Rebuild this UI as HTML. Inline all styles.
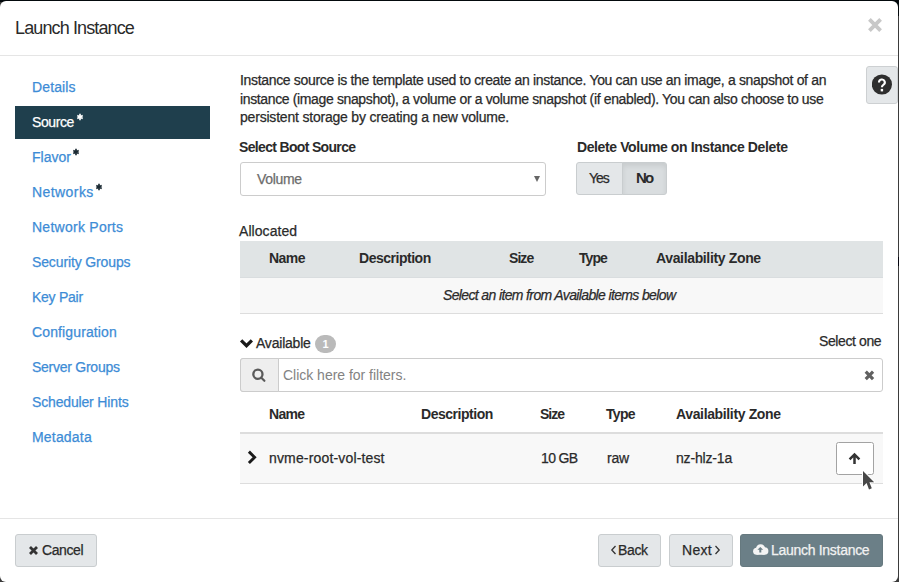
<!DOCTYPE html>
<html><head><meta charset="utf-8"><style>
*{box-sizing:border-box;margin:0;padding:0}
html,body{width:899px;height:582px;overflow:hidden}
body{background:#3b3b3b;font-family:"Liberation Sans",sans-serif;color:#2a2a2a;position:relative}
.t{position:absolute;white-space:nowrap;line-height:normal}
.b{position:absolute}
</style></head><body>
<div class="b" style="left:0;top:0;width:899px;height:2px;background:#03090c"></div>
<div class="b" style="left:880px;top:0;width:19px;height:16px;background:#03090c"></div>
<div class="b" style="left:898px;top:257px;width:1px;height:9px;background:#05050f"></div>
<div class="b" style="left:0;top:1px;width:898px;height:581px;background:#fff;border-radius:6px"></div>
<div class="b" style="left:0;top:55px;width:898px;height:1px;background:#e5e5e5"></div>
<svg class="b" style="left:860px;top:10px" width="30" height="30" viewBox="0 0 30 30"><path d="M9.4 9.4L20.6 20.6M20.6 9.4L9.4 20.6" stroke="#c8c8c8" stroke-width="3.8"/></svg>
<div class="b" style="left:15px;top:106px;width:195px;height:33px;background:#1f3f4d"></div>
<div class="b" style="left:866px;top:66px;width:32px;height:38px;background:#e4e7e9;border:1px solid #cdd0d2;border-radius:3px"></div>
<svg class="b" style="left:872px;top:74px" width="21" height="21" viewBox="0 0 21 21"><circle cx="9.9" cy="10.5" r="10.1" fill="#2e2e2e"/><path d="M7.0 8.4A2.9 2.9 0 1 1 11.3 10.9C10.3 11.5 9.9 12 9.9 13.3" fill="none" stroke="#fff" stroke-width="2.1"/><rect x="8.7" y="14.9" width="2.4" height="2.5" fill="#fff"/></svg>
<div class="b" style="left:240px;top:162px;width:306px;height:34px;border:1px solid #cccccc;border-radius:3px;background:#fff"></div>
<svg class="b" style="left:534px;top:176px" width="6" height="6" viewBox="0 0 6 6"><path d="M0 0H6L3 6Z" fill="#666"/></svg>
<div class="b" style="left:576px;top:162px;width:47px;height:33px;background:#e4e7e9;border:1px solid #c9cdcf;border-radius:3px 0 0 3px"></div>
<div class="b" style="left:622px;top:162px;width:45px;height:33px;background:#d9dddf;border:1px solid #c9cdcf;border-radius:0 3px 3px 0;box-shadow:inset 0 3px 5px rgba(0,0,0,.08)"></div>
<div class="b" style="left:240px;top:241px;width:643px;height:37px;background:#e0e4e5"></div>
<div class="b" style="left:240px;top:277px;width:643px;height:1px;background:#d9dddf"></div>
<div class="b" style="left:240px;top:278px;width:643px;height:35px;background:#f8f8f8;"></div>
<div class="b" style="left:240px;top:313px;width:643px;height:1px;background:#dddddd"></div>
<svg class="b" style="left:239px;top:338px" width="15" height="12" viewBox="0 0 15 12"><path d="M2.13 2.37L7.5 7.74L12.87 2.37" fill="none" stroke="#1a1a1a" stroke-width="3.2"/></svg>
<div class="b" style="left:315px;top:335px;width:21px;height:18px;border-radius:9px;background:#bababa;color:#fff;font-size:11px;font-weight:bold;text-align:center;line-height:18px">1</div>
<div class="b" style="left:240px;top:358px;width:643px;height:34px;border:1px solid #cccccc;border-radius:3px;background:#fff"></div>
<div class="b" style="left:240px;top:358px;width:39px;height:34px;border:1px solid #cccccc;border-radius:3px 0 0 3px;background:#eeeeee"></div>
<svg class="b" style="left:250px;top:368px" width="17" height="16" viewBox="0 0 17 16"><circle cx="7.9" cy="6.3" r="4.6" fill="none" stroke="#5a5a5a" stroke-width="2.3"/><path d="M11.3 9.7L14.4 12.8" stroke="#5a5a5a" stroke-width="2.2" stroke-linecap="round"/></svg>
<svg class="b" style="left:863px;top:369px" width="14" height="14" viewBox="0 0 14 14"><path d="M2.73 2.73L10.07 10.07M10.07 2.73L2.73 10.07" stroke="#606060" stroke-width="3.2"/></svg>
<div class="b" style="left:240px;top:432px;width:643px;height:2px;background:#dddddd"></div>
<div class="b" style="left:240px;top:434px;width:643px;height:49px;background:#f8f8f8"></div>
<div class="b" style="left:240px;top:483px;width:643px;height:1px;background:#dddddd"></div>
<svg class="b" style="left:246px;top:450px" width="12" height="15" viewBox="0 0 12 15"><path d="M2.9 1.6L8.6 7.3L2.9 13.0" fill="none" stroke="#1a1a1a" stroke-width="2.9"/></svg>
<div class="b" style="left:836px;top:442px;width:38px;height:33px;background:#fff;border:1px solid #a3a3a3;border-radius:2.5px"></div>
<svg class="b" style="left:846px;top:450px" width="17" height="17" viewBox="0 0 17 17"><path d="M3.6 9.3L8.5 4.4L13.4 9.3M8.5 5V14" fill="none" stroke="#333" stroke-width="2.5"/></svg>
<div class="b" style="left:0;top:518px;width:898px;height:1px;background:#e5e5e5"></div>
<div class="b" style="left:15px;top:534px;width:82px;height:33px;background:#e4e7e9;border:1px solid #c9cdcf;border-radius:3px"></div>
<div class="b" style="left:598px;top:534px;width:63px;height:33px;background:#e4e7e9;border:1px solid #c9cdcf;border-radius:3px"></div>
<div class="b" style="left:669px;top:534px;width:64px;height:33px;background:#e4e7e9;border:1px solid #c9cdcf;border-radius:3px"></div>
<div class="b" style="left:740px;top:534px;width:143px;height:33px;background:#6b7f87;border:1px solid #66797f;border-radius:3px"></div>
<svg class="b" style="left:27px;top:544px" width="13" height="13" viewBox="0 0 13 13"><path d="M3 3L10 10M10 3L3 10" stroke="#333" stroke-width="2.8"/></svg>
<svg class="b" style="left:609px;top:544px" width="9" height="12" viewBox="0 0 9 12"><path d="M6.5 2L2.8 6L6.5 10" fill="none" stroke="#333" stroke-width="1.3"/></svg>
<svg class="b" style="left:713px;top:544px" width="9" height="12" viewBox="0 0 9 12"><path d="M2.5 2L6.2 6L2.5 10" fill="none" stroke="#333" stroke-width="1.3"/></svg>
<svg class="b" style="left:752px;top:543px" width="17" height="13" viewBox="0 0 17 13"><g fill="#f4f4f4"><circle cx="4.6" cy="8.3" r="3.5"/><circle cx="8.6" cy="5.8" r="4.6"/><circle cx="12.6" cy="8.0" r="3.8"/><rect x="4.6" y="7.5" width="8" height="4.3"/></g><path d="M8.3 3.9L11.2 6.7H9.3V9.6H7.3V6.7H5.4Z" fill="#6b7f87"/></svg>
<div class="t" style="left:15px;top:18px;color:#2a2a2a;font-size:18px;letter-spacing:-0.879px">Launch Instance</div>
<div class="t" style="left:32px;top:79px;color:#3d8cd6;font-size:14px;letter-spacing:0.133px;-webkit-text-stroke:0.25px #3d8cd6">Details</div>
<div class="t" style="left:32px;top:114px;color:#fff;font-size:14px;letter-spacing:-0.420px;-webkit-text-stroke:0.25px #fff">Source</div>
<div class="t" style="left:32px;top:149px;color:#3d8cd6;font-size:14px;letter-spacing:0.000px;-webkit-text-stroke:0.25px #3d8cd6">Flavor</div>
<div class="t" style="left:32px;top:184px;color:#3d8cd6;font-size:14px;letter-spacing:0.429px;-webkit-text-stroke:0.25px #3d8cd6">Networks</div>
<div class="t" style="left:32px;top:219px;color:#3d8cd6;font-size:14px;letter-spacing:0.258px;-webkit-text-stroke:0.25px #3d8cd6">Network Ports</div>
<div class="t" style="left:32px;top:254px;color:#3d8cd6;font-size:14px;letter-spacing:-0.129px;-webkit-text-stroke:0.25px #3d8cd6">Security Groups</div>
<div class="t" style="left:32px;top:289px;color:#3d8cd6;font-size:14px;letter-spacing:-0.257px;-webkit-text-stroke:0.25px #3d8cd6">Key Pair</div>
<div class="t" style="left:32px;top:324px;color:#3d8cd6;font-size:14px;letter-spacing:0.125px;-webkit-text-stroke:0.25px #3d8cd6">Configuration</div>
<div class="t" style="left:32px;top:359px;color:#3d8cd6;font-size:14px;letter-spacing:-0.258px;-webkit-text-stroke:0.25px #3d8cd6">Server Groups</div>
<div class="t" style="left:32px;top:394px;color:#3d8cd6;font-size:14px;letter-spacing:-0.157px;-webkit-text-stroke:0.25px #3d8cd6">Scheduler Hints</div>
<div class="t" style="left:32px;top:429px;color:#3d8cd6;font-size:14px;letter-spacing:0.186px;-webkit-text-stroke:0.25px #3d8cd6">Metadata</div>
<div class="t" style="left:240px;top:72px;color:#2a2a2a;font-size:14px;letter-spacing:-0.333px;-webkit-text-stroke:0.25px #2a2a2a">Instance source is the template used to create an instance. You can use an image, a snapshot of an</div>
<div class="t" style="left:240px;top:91px;color:#2a2a2a;font-size:14px;letter-spacing:-0.365px;-webkit-text-stroke:0.25px #2a2a2a">instance (image snapshot), a volume or a volume snapshot (if enabled). You can also choose to use</div>
<div class="t" style="left:240px;top:109px;color:#2a2a2a;font-size:14px;letter-spacing:-0.200px;-webkit-text-stroke:0.25px #2a2a2a">persistent storage by creating a new volume.</div>
<div class="t" style="left:239px;top:139px;color:#2a2a2a;font-size:14px;font-weight:bold;letter-spacing:-0.665px">Select Boot Source</div>
<div class="t" style="left:577px;top:139px;color:#2a2a2a;font-size:14px;font-weight:bold;letter-spacing:-0.390px">Delete Volume on Instance Delete</div>
<div class="t" style="left:257px;top:171px;color:#6c6c6c;font-size:14px;letter-spacing:-0.320px;-webkit-text-stroke:0.25px #6c6c6c">Volume</div>
<div class="t" style="left:589px;top:170px;color:#2a2a2a;font-size:14px;letter-spacing:-1.000px;-webkit-text-stroke:0.25px #2a2a2a">Yes</div>
<div class="t" style="left:636px;top:169px;color:#2a2a2a;font-size:15px;font-weight:bold;letter-spacing:-1.900px">No</div>
<div class="t" style="left:239px;top:223px;color:#2a2a2a;font-size:14px;letter-spacing:0.062px;-webkit-text-stroke:0.25px #2a2a2a">Allocated</div>
<div class="t" style="left:269px;top:250px;color:#2a2a2a;font-size:14px;font-weight:bold;letter-spacing:-0.567px">Name</div>
<div class="t" style="left:359px;top:250px;color:#2a2a2a;font-size:14px;font-weight:bold;letter-spacing:-0.480px">Description</div>
<div class="t" style="left:509px;top:250px;color:#2a2a2a;font-size:14px;font-weight:bold;letter-spacing:-0.933px">Size</div>
<div class="t" style="left:579px;top:250px;color:#2a2a2a;font-size:14px;font-weight:bold;letter-spacing:-0.933px">Type</div>
<div class="t" style="left:656px;top:250px;color:#2a2a2a;font-size:14px;font-weight:bold;letter-spacing:-0.350px">Availability Zone</div>
<div class="t" style="left:443px;top:287px;color:#2a2a2a;font-size:14px;font-style:italic;letter-spacing:-0.633px;-webkit-text-stroke:0.25px #2a2a2a">Select an item from Available items below</div>
<div class="t" style="left:256px;top:335px;color:#2a2a2a;font-size:14px;letter-spacing:-0.213px;-webkit-text-stroke:0.25px #2a2a2a">Available</div>
<div class="t" style="left:819px;top:333px;color:#2a2a2a;font-size:14px;letter-spacing:-0.389px;-webkit-text-stroke:0.25px #2a2a2a">Select one</div>
<div class="t" style="left:283px;top:367px;color:#838383;font-size:14px;letter-spacing:-0.018px">Click here for filters.</div>
<div class="t" style="left:269px;top:406px;color:#2a2a2a;font-size:14px;font-weight:bold;letter-spacing:-0.667px">Name</div>
<div class="t" style="left:421px;top:406px;color:#2a2a2a;font-size:14px;font-weight:bold;letter-spacing:-0.470px">Description</div>
<div class="t" style="left:540px;top:406px;color:#2a2a2a;font-size:14px;font-weight:bold;letter-spacing:-0.967px">Size</div>
<div class="t" style="left:606px;top:406px;color:#2a2a2a;font-size:14px;font-weight:bold;letter-spacing:-0.667px">Type</div>
<div class="t" style="left:676px;top:406px;color:#2a2a2a;font-size:14px;font-weight:bold;letter-spacing:-0.356px">Availability Zone</div>
<div class="t" style="left:269px;top:450px;color:#2a2a2a;font-size:14px;letter-spacing:0.159px;-webkit-text-stroke:0.25px #2a2a2a">nvme-root-vol-test</div>
<div class="t" style="left:541px;top:450px;color:#2a2a2a;font-size:14px;letter-spacing:-0.625px;-webkit-text-stroke:0.25px #2a2a2a">10 GB</div>
<div class="t" style="left:607px;top:450px;color:#2a2a2a;font-size:14px;letter-spacing:-0.250px;-webkit-text-stroke:0.25px #2a2a2a">raw</div>
<div class="t" style="left:676px;top:450px;color:#2a2a2a;font-size:14px;letter-spacing:-0.162px;-webkit-text-stroke:0.25px #2a2a2a">nz-hlz-1a</div>
<div class="t" style="left:42px;top:542px;color:#2a2a2a;font-size:14px;letter-spacing:-0.400px;-webkit-text-stroke:0.25px #2a2a2a">Cancel</div>
<div class="t" style="left:618px;top:542px;color:#2a2a2a;font-size:14px;letter-spacing:-0.367px;-webkit-text-stroke:0.25px #2a2a2a">Back</div>
<div class="t" style="left:682px;top:542px;color:#2a2a2a;font-size:14px;letter-spacing:0.300px;-webkit-text-stroke:0.25px #2a2a2a">Next</div>
<div class="t" style="left:771px;top:542px;color:#f2f2f2;font-size:14px;letter-spacing:-0.293px;-webkit-text-stroke:0.25px #f2f2f2">Launch Instance</div>
<svg class="b" style="left:76.3px;top:113px" width="8" height="8" viewBox="0 0 8 8"><path d="M4 0.85V7.15M1.27 2.42L6.73 5.58M1.27 5.58L6.73 2.42" stroke="#fff" stroke-width="1.65"/></svg>
<svg class="b" style="left:72.4px;top:147.8px" width="8" height="8" viewBox="0 0 8 8"><path d="M4 0.85V7.15M1.27 2.42L6.73 5.58M1.27 5.58L6.73 2.42" stroke="#1b2a33" stroke-width="1.65"/></svg>
<svg class="b" style="left:94.5px;top:182.8px" width="8" height="8" viewBox="0 0 8 8"><path d="M4 0.85V7.15M1.27 2.42L6.73 5.58M1.27 5.58L6.73 2.42" stroke="#1b2a33" stroke-width="1.65"/></svg>
<svg class="b" style="left:855px;top:465px" width="25" height="30" viewBox="0 0 25 30"><path d="M8 6V21.4L11.6 18L14 24.4L16.8 23.2L14.4 17.2H19.2Z" fill="#474747" stroke="#fff" stroke-width="2" stroke-linejoin="round" paint-order="stroke"/></svg>
</body></html>
